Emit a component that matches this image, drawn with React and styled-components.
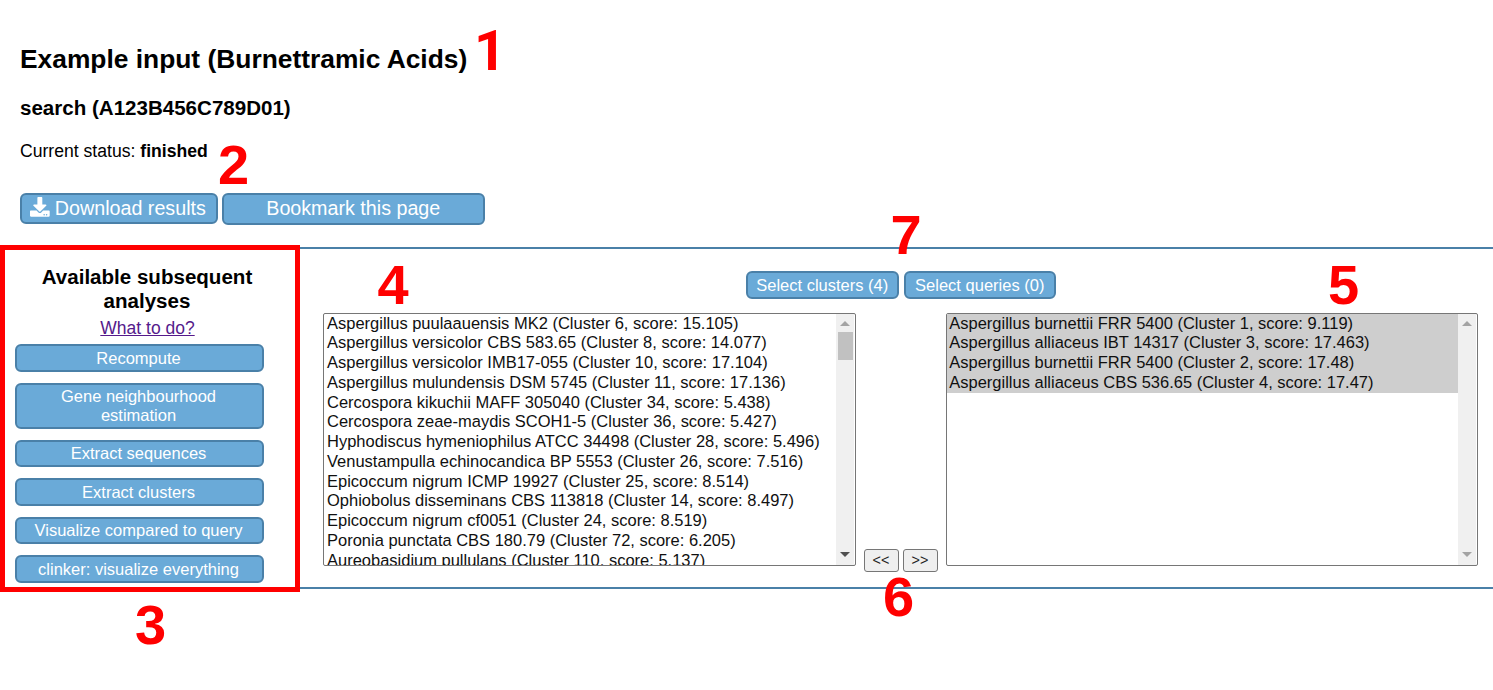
import React from "react";
import styled, { createGlobalStyle } from "styled-components";
import { FaDownload } from "react-icons/fa";

const GlobalStyle = createGlobalStyle`
  * { box-sizing: border-box; }
  body {
    margin: 0;
    background: #fff;
    color: #000;
    font-family: "Liberation Sans", Arial, sans-serif;
    font-size: 17.6px;
    overflow: hidden;
  }
`;

const Page = styled.div`
  position: relative;
  width: 1493px;
  height: 690px;
  overflow: hidden;
`;

const Header = styled.header`
  height: 247px;
  padding: 44px 20px 0;
`;

const Title = styled.h2`
  margin: 0 0 22px;
  font-size: 26.36px;
  line-height: 30px;
`;

const JobName = styled.h3`
  margin: 0 0 21px;
  font-size: 20.55px;
  line-height: 24px;
`;

const Status = styled.p`
  margin: 0 0 32px;
  font-size: 17.6px;
  line-height: 20px;
`;

const ButtonRow = styled.div`
  display: flex;
  align-items: flex-start;
  justify-content: ${(p) => (p.$center ? "center" : "flex-start")};
  gap: ${(p) => p.$gap || "5px"};
`;

const Button = styled.button`
  display: flex;
  align-items: center;
  justify-content: center;
  gap: 5px;
  width: ${(p) => p.$width};
  min-height: ${(p) => p.$height || "27.5px"};
  margin: 0;
  padding: ${(p) => p.$padding || "2.5px 9px 2.5px 7.5px"};
  border: 2px solid #4a80a8;
  border-radius: 6px;
  background: #6aaad8;
  color: #fff;
  font-family: inherit;
  font-size: ${(p) => p.$size || "16.5px"};
  line-height: 18.5px;
  text-align: center;
`;

const DownloadIcon = styled(FaDownload)`
  margin-top: -3px;
`;

const Panel = styled.main`
  display: flex;
  height: 342px;
  border-top: 2px solid #4a80a8;
  border-bottom: 2px solid #4a80a8;
`;

const Sidebar = styled.aside`
  width: 300px;
  padding: 16px 5px 0 0;
  flex: none;
  text-align: center;
`;

const SidebarTitle = styled.h3`
  width: 240px;
  margin: 0 0 5px 27px;
  font-size: 20.55px;
  line-height: 24px;
`;

const HelpLink = styled.a`
  display: block;
  margin: 0 0 6.3px;
  font-size: 17.5px;
  line-height: 20px;
  color: #551a8b;
  text-decoration: underline;
`;

const Actions = styled.div`
  display: flex;
  flex-direction: column;
  gap: 11px;
  padding-left: 14.5px;
`;

const Workspace = styled.section`
  flex: 1;
  padding: 22px 15px 0 23px;
`;

const Pickers = styled.div`
  display: flex;
  align-items: flex-end;
  margin-top: 14px;
`;

const ListBox = styled.div`
  display: flex;
  width: ${(p) => p.$width};
  height: 253px;
  padding: 0 1px 0 0;
  border: 1px solid #767676;
  border-radius: 2px;
  overflow: hidden;
`;

const Options = styled.ul`
  flex: 1;
  margin: 0;
  padding: 0;
  list-style: none;
  overflow: hidden;
`;

const Option = styled.li`
  height: 19.77px;
  padding-left: ${(p) => (p.$selected ? "2.3px" : "3px")};
  background: ${(p) => (p.$selected ? "#cecece" : "transparent")};
  color: #101010;
  font-size: 16.49px;
  line-height: 19.77px;
  white-space: nowrap;
`;

const ScrollTrack = styled.div`
  display: flex;
  flex-direction: column;
  align-items: center;
  width: 18px;
  padding: 7px 0 8px;
  background: #f0f0f0;
`;

const Thumb = styled.div`
  width: 15px;
  height: 28px;
  margin-top: 6px;
  background: #c1c1c1;
`;

const Arrow = styled.span`
  width: 0;
  height: 0;
  border: 5px solid transparent;
  ${(p) =>
    p.$down
      ? `border-top-color: ${p.$color}; border-bottom: 0; margin-top: auto;`
      : `border-bottom-color: ${p.$color}; border-top: 0;`}
`;

const MoveButtons = styled.div`
  display: flex;
  gap: 4px;
  width: 90px;
  padding-left: 8px;
  margin-bottom: -6px;
`;

const MoveButton = styled.button`
  width: 35px;
  height: 23px;
  padding: 0 1px 0 0;
  border: 1px solid #767676;
  border-radius: 3px;
  background: #efefef;
  color: #222;
  font-family: inherit;
  font-size: 14.4px;
  line-height: 20px;
`;

const Highlight = styled.div`
  position: absolute;
  left: 0;
  top: 245px;
  width: 300px;
  height: 347px;
  border: 5px solid #f00;
`;

const Marker = styled.span`
  position: absolute;
  left: ${(p) => p.$x}px;
  top: ${(p) => p.$y}px;
  color: #f00;
  font-family: ${(p) => p.$font || "inherit"};
  font-size: 56px;
  font-weight: 700;
  line-height: 56px;
`;

const analyses = [
  "Recompute",
  "Gene neighbourhood estimation",
  "Extract sequences",
  "Extract clusters",
  "Visualize compared to query",
  "clinker: visualize everything",
];

const available = [
  "Aspergillus puulaauensis MK2 (Cluster 6, score: 15.105)",
  "Aspergillus versicolor CBS 583.65 (Cluster 8, score: 14.077)",
  "Aspergillus versicolor IMB17-055 (Cluster 10, score: 17.104)",
  "Aspergillus mulundensis DSM 5745 (Cluster 11, score: 17.136)",
  "Cercospora kikuchii MAFF 305040 (Cluster 34, score: 5.438)",
  "Cercospora zeae-maydis SCOH1-5 (Cluster 36, score: 5.427)",
  "Hyphodiscus hymeniophilus ATCC 34498 (Cluster 28, score: 5.496)",
  "Venustampulla echinocandica BP 5553 (Cluster 26, score: 7.516)",
  "Epicoccum nigrum ICMP 19927 (Cluster 25, score: 8.514)",
  "Ophiobolus disseminans CBS 113818 (Cluster 14, score: 8.497)",
  "Epicoccum nigrum cf0051 (Cluster 24, score: 8.519)",
  "Poronia punctata CBS 180.79 (Cluster 72, score: 6.205)",
  "Aureobasidium pullulans (Cluster 110, score: 5.137)",
];

const selected = [
  "Aspergillus burnettii FRR 5400 (Cluster 1, score: 9.119)",
  "Aspergillus alliaceus IBT 14317 (Cluster 3, score: 17.463)",
  "Aspergillus burnettii FRR 5400 (Cluster 2, score: 17.48)",
  "Aspergillus alliaceus CBS 536.65 (Cluster 4, score: 17.47)",
];

const markers = [
  { label: "1", x: 474, y: 23, font: "Roboto, sans-serif" },
  { label: "2", x: 218, y: 137 },
  { label: "3", x: 135, y: 597 },
  { label: "4", x: 377.5, y: 257 },
  { label: "5", x: 1328, y: 257 },
  { label: "6", x: 883, y: 569 },
  { label: "7", x: 890.5, y: 207 },
];

function ClusterList({ items, width, isSelected, scrollable }) {
  return (
    <ListBox $width={width}>
      <Options>
        {items.map((item) => (
          <Option key={item} $selected={isSelected}>
            {item}
          </Option>
        ))}
      </Options>
      <ScrollTrack>
        <Arrow $color="#a3a3a3" />
        {scrollable && <Thumb />}
        <Arrow $down $color={scrollable ? "#505050" : "#a3a3a3"} />
      </ScrollTrack>
    </ListBox>
  );
}

export default function App() {
  return (
    <Page>
      <GlobalStyle />
      <Header>
        <Title>Example input (Burnettramic Acids)</Title>
        <JobName>search (A123B456C789D01)</JobName>
        <Status>
          Current status: <b>finished</b>
        </Status>
        <ButtonRow $gap="4.5px">
          <Button $width="197.5px" $height="31px" $size="19.7px">
            <DownloadIcon />
            Download results
          </Button>
          <Button
            $width="262.5px"
            $height="31.5px"
            $size="19.7px"
            $padding="2px 8px 3.5px"
          >
            Bookmark this page
          </Button>
        </ButtonRow>
      </Header>
      <Panel>
        <Sidebar>
          <SidebarTitle>Available subsequent analyses</SidebarTitle>
          <HelpLink>What to do?</HelpLink>
          <Actions>
            {analyses.map((name) => (
              <Button key={name} $width="249.5px">
                {name}
              </Button>
            ))}
          </Actions>
        </Sidebar>
        <Workspace>
          <ButtonRow $center>
            <Button $width="153.5px" $padding="2.5px 7px">
              Select clusters (4)
            </Button>
            <Button $width="151.5px" $padding="2.5px 7px">
              Select queries (0)
            </Button>
          </ButtonRow>
          <Pickers>
            <ClusterList items={available} width="533px" scrollable />
            <MoveButtons>
              <MoveButton>&lt;&lt;</MoveButton>
              <MoveButton>&gt;&gt;</MoveButton>
            </MoveButtons>
            <ClusterList items={selected} width="532px" isSelected />
          </Pickers>
        </Workspace>
      </Panel>
      <Highlight />
      {markers.map((m) => (
        <Marker key={m.label} $x={m.x} $y={m.y} $font={m.font}>
          {m.label}
        </Marker>
      ))}
    </Page>
  );
}
